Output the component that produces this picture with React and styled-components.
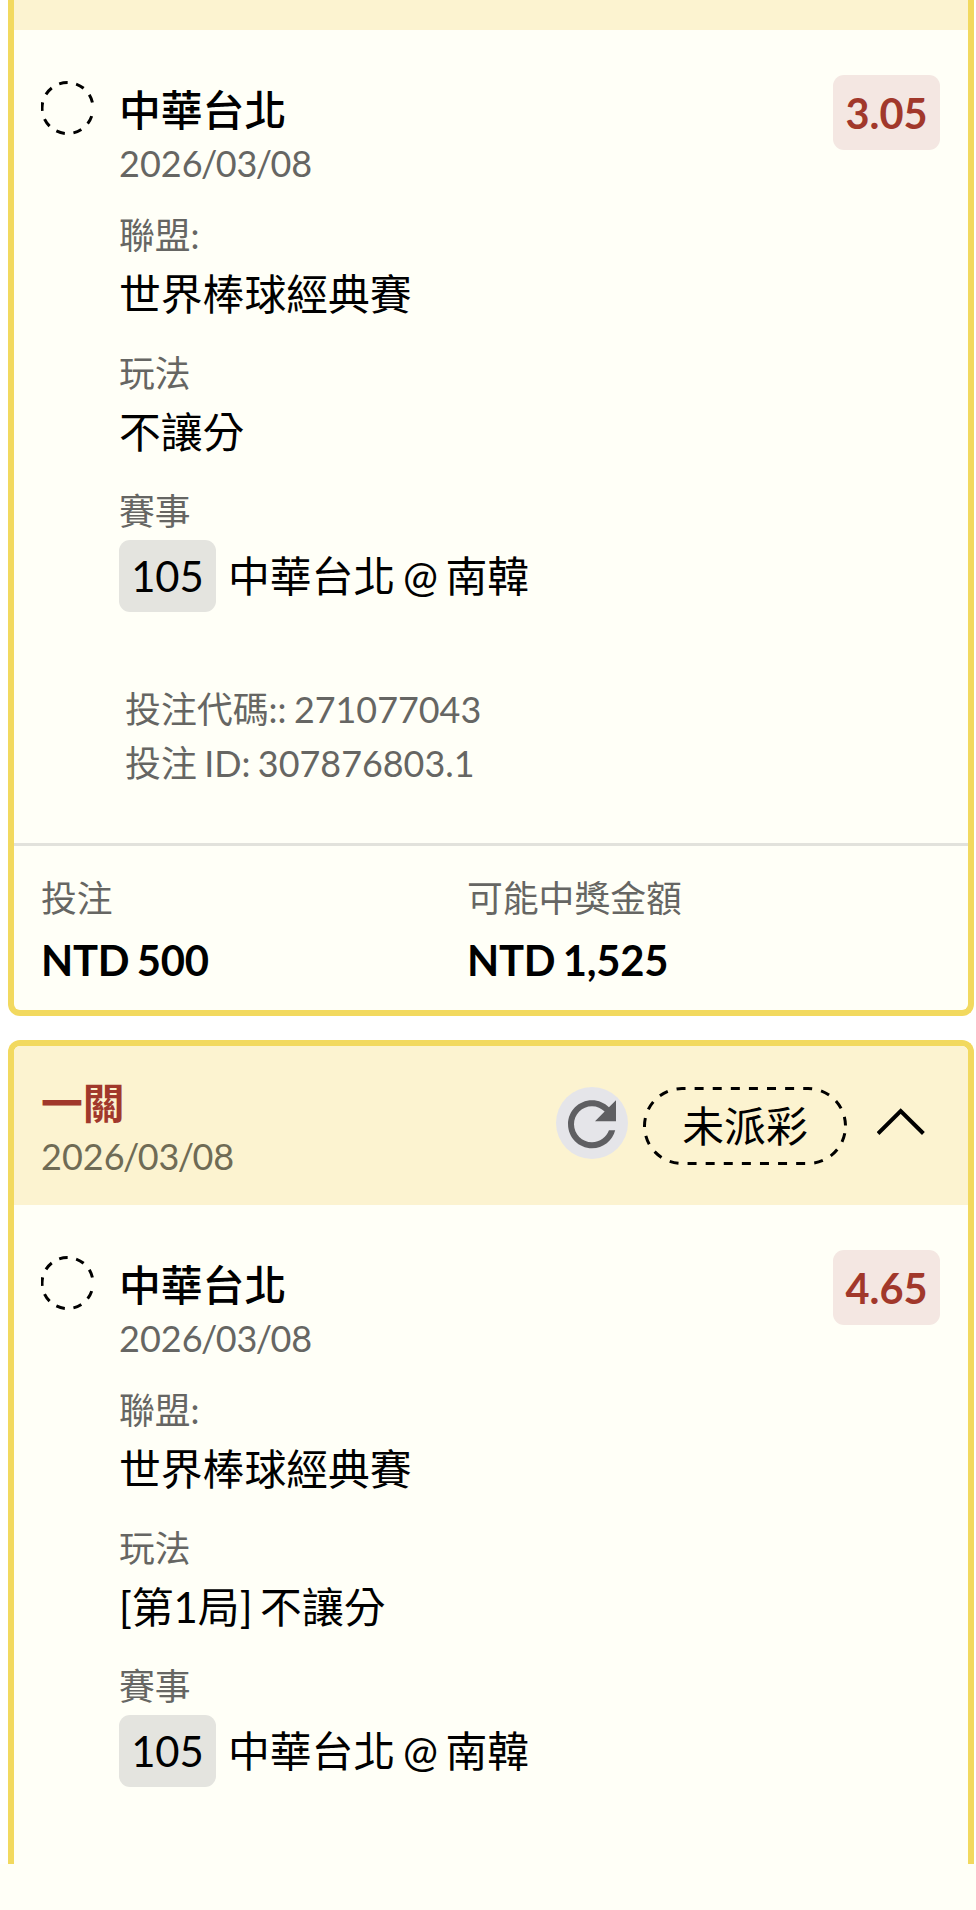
import styled, { createGlobalStyle } from 'styled-components';

const GlobalStyle = createGlobalStyle`
  * {
    box-sizing: border-box;
  }

  body {
    margin: 0;
    background-color: #ffffff;
    font-family: Lato, "Noto Sans CJK TC", sans-serif;
    color: #000000;
  }
`;

const Page = styled.div`
  width: 976px;
  height: 1910px;
  overflow: hidden;
  display: flex;
  flex-direction: column;
`;

const List = styled.main`
  height: 1864px;
  padding: 0 2px 0 8px;
  overflow: hidden;
  display: flex;
  flex-direction: column;
  gap: 24px;
`;

const BottomBar = styled.div`
  flex: 1;
  background-color: #fffff7;
`;

const Card = styled.section`
  flex: none;
  height: ${({ $height }) => $height}px;
  border: 6px solid #f2d95f;
  border-top-width: ${({ $cutTop }) => ($cutTop ? 0 : 6)}px;
  border-bottom-width: ${({ $cutBottom }) => ($cutBottom ? 0 : 6)}px;
  border-radius: ${({ $cutTop, $cutBottom }) =>
    `${$cutTop ? '0 0' : '12px 12px'} ${$cutBottom ? '0 0' : '12px 12px'}`};
  background-color: #fffff7;
  overflow: hidden;
`;

const CardHead = styled.header`
  height: ${({ $height }) => $height}px;
  padding: 30px 39px 0 27px;
  background-color: #fcf3d0;
  display: flex;
  align-items: flex-start;
  justify-content: space-between;
`;

const HeadTitle = styled.div`
  font-size: 41.8px;
  line-height: 54px;
  font-weight: 700;
  color: #a1382b;
`;

const DateText = styled.div`
  font-size: 36px;
  line-height: 52px;
  color: ${({ $onYellow }) => ($onYellow ? '#6f6b55' : '#666663')};
`;

const Slash = styled.span`
  margin: 0 -1.6px;
`;

const HeadActions = styled.div`
  display: flex;
  align-items: flex-start;
  padding-top: 11px;
`;

const RefreshButton = styled.button`
  width: 72px;
  height: 72px;
  margin: 0 15px 0 0;
  padding: 0;
  border: 0;
  border-radius: 50%;
  background-color: #e5e5e9;
  display: flex;
`;

const Status = styled.div`
  position: relative;
  width: 204px;
  height: 78px;
  margin-right: 30px;
  display: flex;
  align-items: center;
  justify-content: center;
  font-size: 41.8px;
  line-height: 54px;
`;

const StatusOutline = styled.svg`
  position: absolute;
  inset: 0;
`;

const Arrow = styled.svg`
  margin-top: 17px;
`;

const Body = styled.div`
  padding: 45px 28px 0 27px;
  display: flex;
  align-items: flex-start;
`;

const Ring = styled.svg`
  flex: none;
  margin: 6px 24px 0 0;
`;

const Info = styled.div`
  flex: 1;
  padding-top: 8px;
`;

const Team = styled.div`
  font-size: 41.8px;
  line-height: 54px;
  font-weight: 500;
`;

const Label = styled.div`
  font-size: 35.8px;
  line-height: 44px;
  color: #666663;
`;

const Field = styled.div`
  margin-top: ${({ $gap }) => $gap}px;
`;

const Value = styled.div`
  font-size: 41.8px;
  line-height: 54px;
  margin-top: 9px;
  word-spacing: -3px;
`;

const Game = styled.div`
  height: 72px;
  margin-top: 6px;
  display: flex;
  align-items: center;
  gap: 12px;
  font-size: 41.8px;
  line-height: 54px;
  word-spacing: -3px;
`;

const GameNo = styled.span`
  width: 97px;
  height: 72px;
  border-radius: 11px;
  background-color: #e4e4df;
  display: flex;
  align-items: center;
  justify-content: center;
`;

const Odds = styled.div`
  flex: none;
  width: 107px;
  height: 75px;
  border-radius: 11px;
  background-color: #f4e7e2;
  color: #a1382b;
  font-size: 41.5px;
  font-weight: 700;
  display: flex;
  align-items: center;
  justify-content: center;
`;

const Codes = styled.div`
  padding: 71px 0 0 111px;
  font-size: 35.9px;
  line-height: 54px;
  color: #666663;
  word-spacing: -1.8px;
`;

const Footer = styled.footer`
  margin-top: 52px;
  padding: 31px 27px 0;
  border-top: 3px solid #e2e2dc;
  display: grid;
  grid-template-columns: 426px 1fr;
`;

const Amount = styled.div`
  font-size: 41.8px;
  line-height: 54px;
  font-weight: 700;
  margin-top: 12px;
  letter-spacing: -0.25px;
  word-spacing: -2.4px;
`;

function PlayDate({ value, onYellow }) {
  const [year, month, day] = value.split('/');
  return (
    <DateText $onYellow={onYellow}>
      {year}
      <Slash>/</Slash>
      {month}
      <Slash>/</Slash>
      {day}
    </DateText>
  );
}

function Pending() {
  return (
    <Status>
      <StatusOutline width="204" height="78" fill="none" stroke="#000" strokeWidth="3">
        <path
          d="M201.8 46.3A37.5 37.5 0 0 1 165 76.5H39A37.5 37.5 0 0 1 1.5 39A37.5 37.5 0 0 1 39 1.5H165A37.5 37.5 0 0 1 202.5 38.5"
          strokeDasharray="9 9.1"
        />
      </StatusOutline>
      未派彩
    </Status>
  );
}

function Bet({ odds, play }) {
  return (
    <Body>
      <Ring width="54" height="54" fill="none" stroke="#000" strokeWidth="3">
        <path d="M50.7 35.1A25.5 25.5 0 1 1 51.4 21.5" strokeDasharray="8.6 8.6" />
      </Ring>
      <Info>
        <Team>中華台北</Team>
        <PlayDate value="2026/03/08" />
        <Field $gap={25}>
          <Label>聯盟:</Label>
          <Value>世界棒球經典賽</Value>
        </Field>
        <Field $gap={31}>
          <Label>玩法</Label>
          <Value>{play}</Value>
        </Field>
        <Field $gap={31}>
          <Label>賽事</Label>
          <Game>
            <GameNo>105</GameNo>
            <span>中華台北 @ 南韓</span>
          </Game>
        </Field>
      </Info>
      <Odds>{odds}</Odds>
    </Body>
  );
}

export default function App() {
  return (
    <Page>
      <GlobalStyle />
      <List>
        <Card $height={1016} $cutTop>
          <CardHead $height={29} />
          <Bet odds="3.05" play="不讓分" />
          <Codes>
            <div>投注代碼:: 271077043</div>
            <div>投注 ID: 307876803.1</div>
          </Codes>
          <Footer>
            <div>
              <Label>投注</Label>
              <Amount>NTD 500</Amount>
            </div>
            <div>
              <Label>可能中獎金額</Label>
              <Amount>NTD 1,525</Amount>
            </div>
          </Footer>
        </Card>

        <Card $height={824} $cutBottom>
          <CardHead $height={159}>
            <div>
              <HeadTitle>一關</HeadTitle>
              <PlayDate value="2026/03/08" onYellow />
            </div>
            <HeadActions>
              <RefreshButton aria-label="refresh">
                <svg width="72" height="72" viewBox="0 -0.4 24 24" fill="#5f5f62">
                  <path d="M17.65 6.35C16.2 4.9 14.21 4 12 4c-4.42 0-7.99 3.58-7.99 8s3.57 8 7.99 8c3.73 0 6.84-2.55 7.73-6h-2.08c-.82 2.33-3.04 4-5.65 4-3.31 0-6-2.69-6-6s2.69-6 6-6c1.66 0 3.14.69 4.22 1.78L13 11h7V4z" />
                </svg>
              </RefreshButton>
              <Pending />
              <Arrow width="52" height="36" fill="none" stroke="#000" strokeWidth="4">
                <path d="M1 29.5L23.7 7L46.4 29.5" />
              </Arrow>
            </HeadActions>
          </CardHead>
          <Bet odds="4.65" play="[第1局] 不讓分" />
        </Card>
      </List>
      <BottomBar />
    </Page>
  );
}
